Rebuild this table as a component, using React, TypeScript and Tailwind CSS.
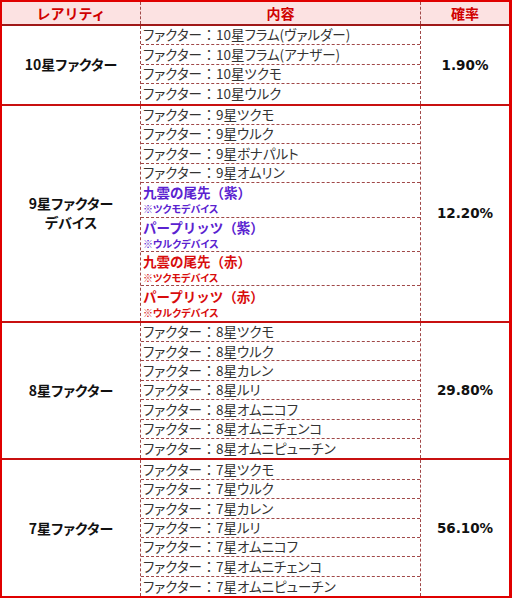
import React from 'react';

type Item = { text: string; sub?: string; color?: 'purple' | 'red' };

type Group = { rarity: string[]; rate: string; items: Item[] };

const groups: Group[] = [
  {
    rarity: ['10星ファクター'],
    rate: '1.90%',
    items: [
      { text: 'ファクター：10星フラム(ヴァルダー)' },
      { text: 'ファクター：10星フラム(アナザー)' },
      { text: 'ファクター：10星ツクモ' },
      { text: 'ファクター：10星ウルク' },
    ],
  },
  {
    rarity: ['9星ファクター', 'デバイス'],
    rate: '12.20%',
    items: [
      { text: 'ファクター：9星ツクモ' },
      { text: 'ファクター：9星ウルク' },
      { text: 'ファクター：9星ボナパルト' },
      { text: 'ファクター：9星オムリン' },
      { text: '九雲の尾先（紫）', sub: '※ツクモデバイス', color: 'purple' },
      { text: 'パープリッツ（紫）', sub: '※ウルクデバイス', color: 'purple' },
      { text: '九雲の尾先（赤）', sub: '※ツクモデバイス', color: 'red' },
      { text: 'パープリッツ（赤）', sub: '※ウルクデバイス', color: 'red' },
    ],
  },
  {
    rarity: ['8星ファクター'],
    rate: '29.80%',
    items: [
      { text: 'ファクター：8星ツクモ' },
      { text: 'ファクター：8星ウルク' },
      { text: 'ファクター：8星カレン' },
      { text: 'ファクター：8星ルリ' },
      { text: 'ファクター：8星オムニコフ' },
      { text: 'ファクター：8星オムニチェンコ' },
      { text: 'ファクター：8星オムニピューチン' },
    ],
  },
  {
    rarity: ['7星ファクター'],
    rate: '56.10%',
    items: [
      { text: 'ファクター：7星ツクモ' },
      { text: 'ファクター：7星ウルク' },
      { text: 'ファクター：7星カレン' },
      { text: 'ファクター：7星ルリ' },
      { text: 'ファクター：7星オムニコフ' },
      { text: 'ファクター：7星オムニチェンコ' },
      { text: 'ファクター：7星オムニピューチン' },
    ],
  },
];

const jp = { fontFamily: '"Noto Sans CJK JP", "Noto Sans", sans-serif' };
const num = { fontFamily: '"DejaVu Sans", "Noto Sans CJK JP", sans-serif' };

const Line: React.FC<{ text: string }> = ({ text }) => {
  const [head, tail] = text.split('：');
  return (
    <>
      <span className="[font-feature-settings:'palt']">{head}</span>
      <span className="inline-block w-[14px] text-center">：</span>
      <span className="[font-feature-settings:'palt']">{tail}</span>
    </>
  );
};

const App: React.FC = () => {
  return (
    <div className="w-[512px] h-[598px] bg-white overflow-hidden" style={jp}>
      <div className="w-[512px] h-[598px] border-2 border-r-[3px] border-[#e00000] flex flex-col">
        <div className="flex h-[24px] shrink-0 bg-[#fce2e2] border-b-2 border-[#a01818] text-[14px] font-bold text-[#d00000] leading-none">
          <div className="w-[139px] border-r border-dashed border-[#a04848] flex items-center justify-center">レアリティ</div>
          <div className="w-[280px] border-r border-dashed border-[#a04848] flex items-center justify-center">内容</div>
          <div className="flex-1 flex items-center justify-center">確率</div>
        </div>

        {groups.map((g, gi) => (
          <div
            key={gi}
            className={`flex shrink-0 ${gi > 0 ? 'border-t-2 border-[#c81010]' : ''}`}
          >
            <div className="w-[139px] border-r border-dashed border-[#a04848] flex flex-col items-center justify-center text-[14px] font-bold text-[#111] leading-[19px] [font-feature-settings:'palt']">
              {g.rarity.map((r, i) => (
                <span key={i}>{r}</span>
              ))}
            </div>
            <div className="w-[280px] border-r border-dashed border-[#a04848] flex flex-col">
              {g.items.map((it, i) => {
                const last = i === g.items.length - 1;
                const border = last ? '' : 'border-b border-dashed border-[#a04848]';
                if (it.sub) {
                  const c = it.color === 'purple' ? 'text-[#5a22d0]' : 'text-[#d80c0c]';
                  return (
                    <div key={i} className={`h-[34.4px] pl-[2px] flex flex-col justify-center ${border} ${c} font-bold`}>
                      <span className="text-[13.5px] leading-[19px]">{it.text}</span>
                      <span className="text-[10px] leading-[14px] [font-feature-settings:'palt']">{it.sub}</span>
                    </div>
                  );
                }
                return (
                  <div key={i} className={`h-[19.4px] pl-[2px] flex items-center text-[13.5px] text-[#333] leading-none whitespace-nowrap ${border}`}>
                    <Line text={it.text} />
                  </div>
                );
              })}
            </div>
            <div className="flex-1 flex items-center justify-center text-[13.5px] font-bold text-[#111]" style={num}>
              {g.rate}
            </div>
          </div>
        ))}
        <div className="flex-1 flex">
          <div className="w-[139px] border-r border-dashed border-[#a04848]" />
          <div className="w-[280px] border-r border-dashed border-[#a04848]" />
        </div>
      </div>
    </div>
  );
};

export default App;
